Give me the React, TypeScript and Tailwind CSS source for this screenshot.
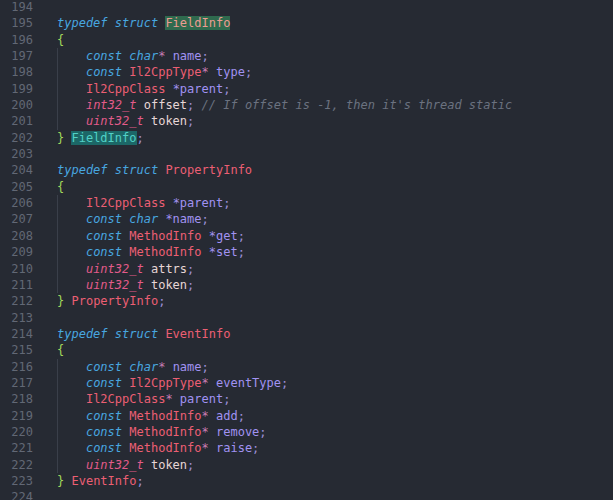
type Tok = [string, string];

const KW = "text-[#48a7e0] italic";
const TY = "text-[#ec5f73]";
const VA = "text-[#a192f2]";
const ST = "text-[#c97db4]";
const ID = "text-[#e6d6d6]";
const PU = "text-[#9a8fd6]";
const CM = "text-[#6b7280] italic";
const BR = "text-[#a3d95b]";
const PK = "text-[#e35b8a] italic";

const lines: { n: number; indent?: boolean; toks: Tok[] }[] = [
  { n: 194, toks: [] },
  { n: 195, toks: [[KW, "typedef struct"], ["", " "], ["bg-[#2f6a4e] text-[#ec9c92]", "FieldInfo"]] },
  { n: 196, toks: [[BR, "{"]] },
  { n: 197, indent: true, toks: [["", "    "], [KW, "const char"], [ST, "*"], ["", " "], [VA, "name"], [PU, ";"]] },
  { n: 198, indent: true, toks: [["", "    "], [KW, "const"], ["", " "], [TY, "Il2CppType"], [ST, "*"], ["", " "], [VA, "type"], [PU, ";"]] },
  { n: 199, indent: true, toks: [["", "    "], [TY, "Il2CppClass"], ["", " "], [VA, "*parent"], [PU, ";"]] },
  { n: 200, indent: true, toks: [["", "    "], [PK, "int32_t"], ["", " "], [ID, "offset"], [PU, ";"], ["", " "], [CM, "// If offset is -1, then it's thread static"]] },
  { n: 201, indent: true, toks: [["", "    "], [PK, "uint32_t"], ["", " "], [ID, "token"], [PU, ";"]] },
  { n: 202, toks: [[BR, "}"], ["", " "], ["bg-[#1c6767] text-[#52d1c6]", "FieldInfo"], [PU, ";"]] },
  { n: 203, toks: [] },
  { n: 204, toks: [[KW, "typedef struct"], ["", " "], [TY, "PropertyInfo"]] },
  { n: 205, toks: [[BR, "{"]] },
  { n: 206, indent: true, toks: [["", "    "], [TY, "Il2CppClass"], ["", " "], [VA, "*parent"], [PU, ";"]] },
  { n: 207, indent: true, toks: [["", "    "], [KW, "const char"], ["", " "], [VA, "*name"], [PU, ";"]] },
  { n: 208, indent: true, toks: [["", "    "], [KW, "const"], ["", " "], [TY, "MethodInfo"], ["", " "], [VA, "*get"], [PU, ";"]] },
  { n: 209, indent: true, toks: [["", "    "], [KW, "const"], ["", " "], [TY, "MethodInfo"], ["", " "], [VA, "*set"], [PU, ";"]] },
  { n: 210, indent: true, toks: [["", "    "], [PK, "uint32_t"], ["", " "], [ID, "attrs"], [PU, ";"]] },
  { n: 211, indent: true, toks: [["", "    "], [PK, "uint32_t"], ["", " "], [ID, "token"], [PU, ";"]] },
  { n: 212, toks: [[BR, "}"], ["", " "], [TY, "PropertyInfo"], [PU, ";"]] },
  { n: 213, toks: [] },
  { n: 214, toks: [[KW, "typedef struct"], ["", " "], [TY, "EventInfo"]] },
  { n: 215, toks: [[BR, "{"]] },
  { n: 216, indent: true, toks: [["", "    "], [KW, "const char"], [ST, "*"], ["", " "], [VA, "name"], [PU, ";"]] },
  { n: 217, indent: true, toks: [["", "    "], [KW, "const"], ["", " "], [TY, "Il2CppType"], [ST, "*"], ["", " "], [VA, "eventType"], [PU, ";"]] },
  { n: 218, indent: true, toks: [["", "    "], [TY, "Il2CppClass"], [ST, "*"], ["", " "], [VA, "parent"], [PU, ";"]] },
  { n: 219, indent: true, toks: [["", "    "], [KW, "const"], ["", " "], [TY, "MethodInfo"], [ST, "*"], ["", " "], [VA, "add"], [PU, ";"]] },
  { n: 220, indent: true, toks: [["", "    "], [KW, "const"], ["", " "], [TY, "MethodInfo"], [ST, "*"], ["", " "], [VA, "remove"], [PU, ";"]] },
  { n: 221, indent: true, toks: [["", "    "], [KW, "const"], ["", " "], [TY, "MethodInfo"], [ST, "*"], ["", " "], [VA, "raise"], [PU, ";"]] },
  { n: 222, indent: true, toks: [["", "    "], [PK, "uint32_t"], ["", " "], [ID, "token"], [PU, ";"]] },
  { n: 223, toks: [[BR, "}"], ["", " "], [TY, "EventInfo"], [PU, ";"]] },
  { n: 224, toks: [] },
];

export default function App() {
  return (
    <div className="w-[613px] h-[500px] overflow-hidden bg-[#262a33] font-['DejaVu_Sans_Mono',monospace] text-[12px] leading-[16.35px]">
      <div className="-mt-px">
        {lines.map((l) => (
          <div key={l.n} className="flex h-[16.35px]">
            <div className="w-[33px] shrink-0 text-right text-[#626875]">{l.n}</div>
            <div className="pl-[24px] whitespace-pre">
              <span className={l.indent ? "shadow-[inset_1px_0_0_#3a3f4a] inline-block" : ""}>
                {l.toks.map(([c, t], i) => (
                  <span key={i} className={c}>
                    {t}
                  </span>
                ))}
              </span>
            </div>
          </div>
        ))}
      </div>
    </div>
  );
}
